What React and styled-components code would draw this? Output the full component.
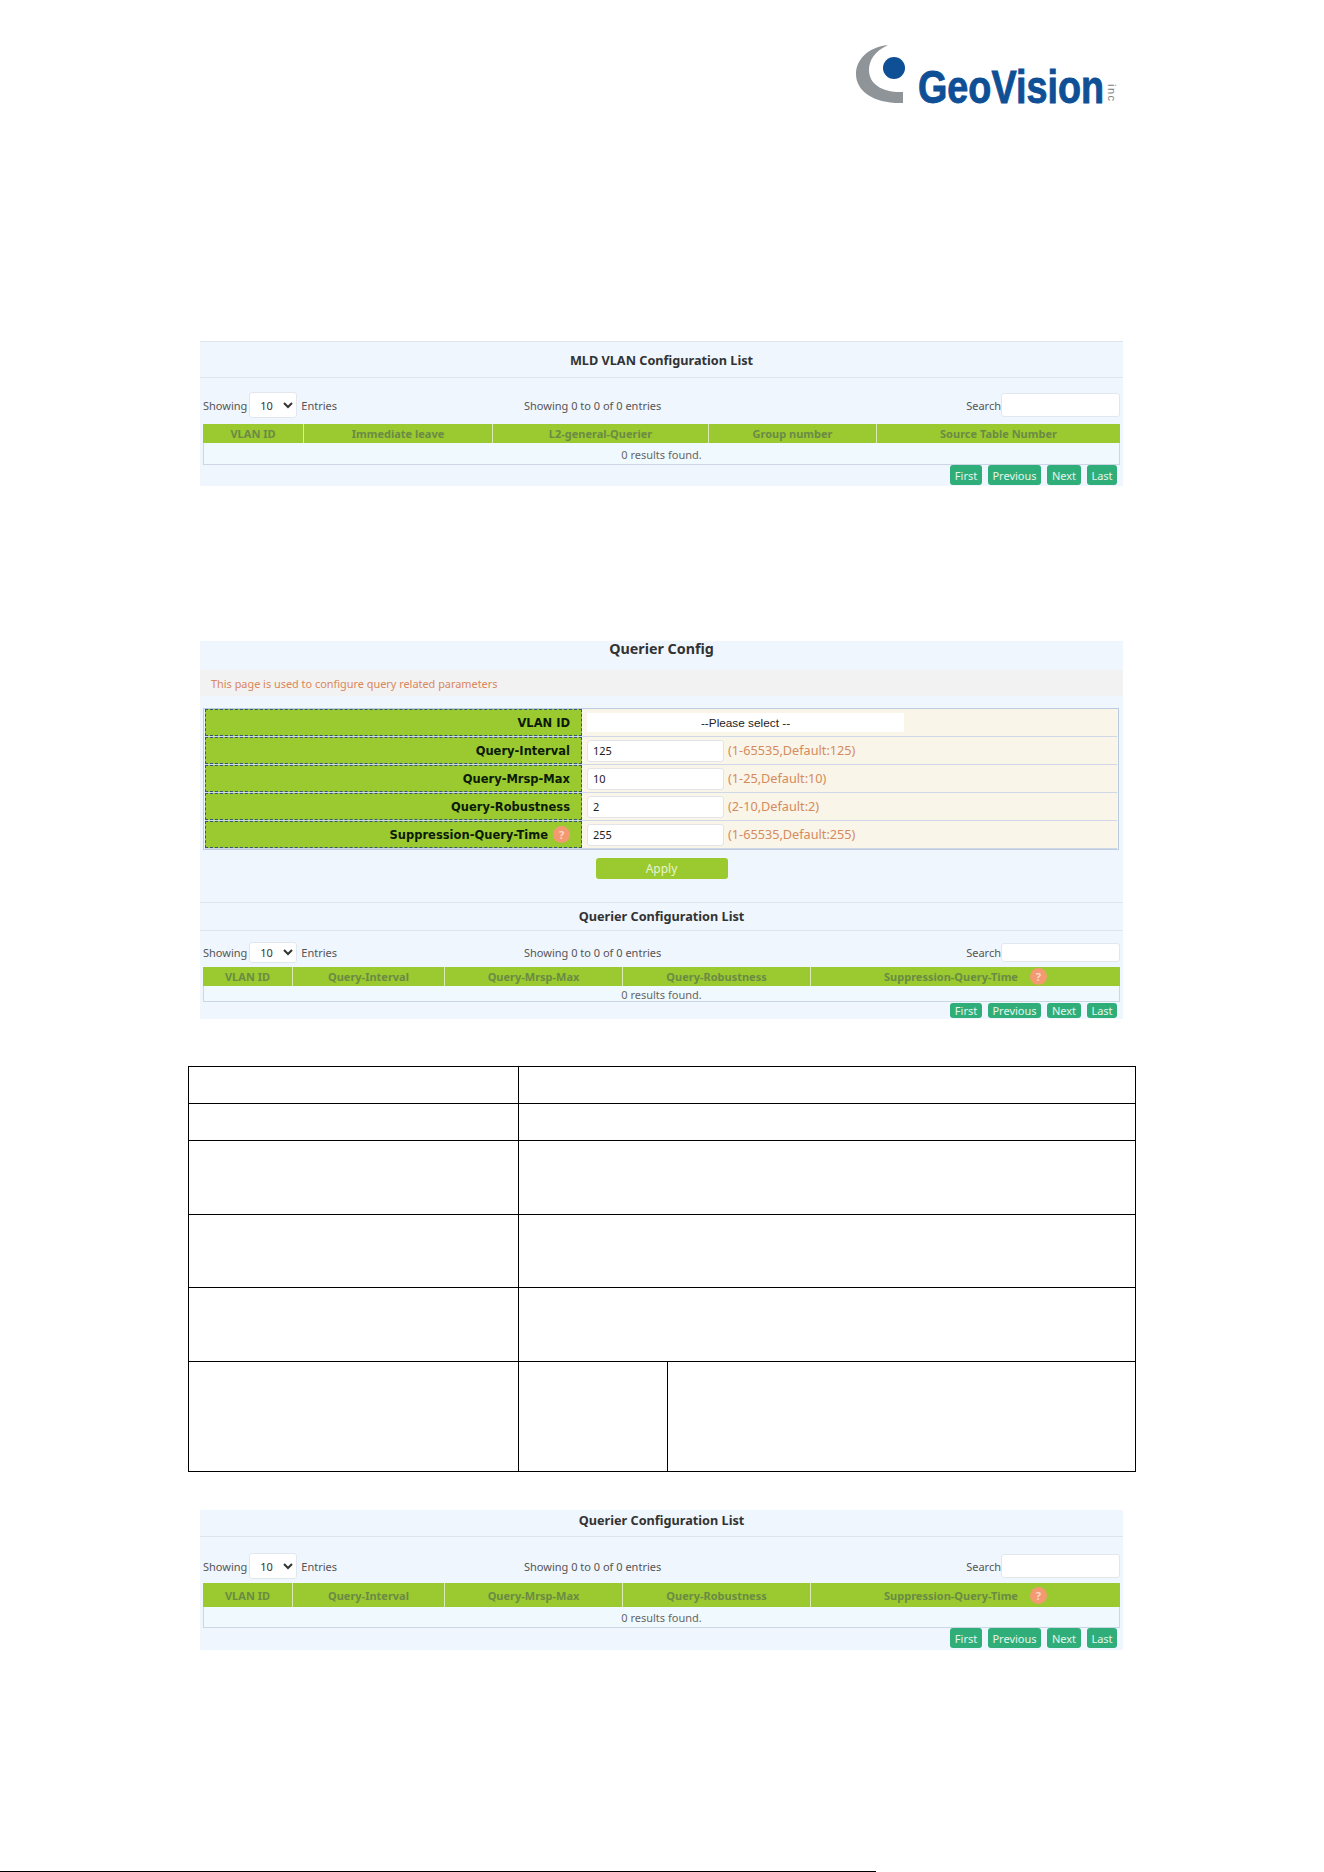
import React from "react";
import styled, { createGlobalStyle } from "styled-components";

const GlobalStyle = createGlobalStyle`
  html, body {
    margin: 0;
    padding: 0;
    background: #fff;
  }
  * {
    box-sizing: border-box;
  }
`;

const Page = styled.div`
  height: 1872px;
  display: flex;
  flex-direction: column;
  overflow: hidden;
  font-family: "Noto Sans", "Open Sans", sans-serif;
`;

const LogoRow = styled.header`
  height: 125px;
  padding: 40px 174px 0 0;
  display: flex;
  justify-content: flex-end;
`;

const LogoWord = styled.text`
  font-family: "Liberation Sans", Arial, sans-serif;
  font-weight: 700;
  font-size: 46px;
  fill: #0e4f95;
  stroke: #0e4f95;
  stroke-width: 0.9px;
`;

const LogoInc = styled.text`
  font-family: "Liberation Sans", Arial, sans-serif;
  font-size: 11px;
  letter-spacing: 1.5px;
  fill: #7c8287;
`;

const Sheet = styled.main`
  padding: 0 188px;
  display: flex;
  flex-direction: column;
`;

const Panel = styled.section`
  margin: ${(p) => p.$top}px 13px 0 12px;
  background: #f0f6fd;
`;

const ListBlock = styled.div`
  border-top: ${(p) => (p.$topLine ? "1px solid #dde4ee" : "none")};
`;

const ListTitle = styled.h2`
  margin: 0;
  height: ${(p) => p.$h}px;
  padding-bottom: ${(p) => p.$pb || 0}px;
  border-bottom: 1px solid #dde4ee;
  display: flex;
  align-items: center;
  justify-content: center;
  font-size: 12.7px;
  font-weight: 700;
  color: #333;
`;

const Toolbar = styled.div`
  height: ${(p) => p.$h}px;
  padding: 0 3px ${(p) => p.$pb}px;
  display: grid;
  grid-template-columns: 321px 1fr auto;
  align-items: end;
  font-size: 11px;
  color: #555;
`;

const ToolGroup = styled.div`
  height: ${(p) => p.$h}px;
  display: flex;
  align-items: center;
`;

const PageSize = styled.select`
  width: 48px;
  height: 100%;
  margin: 0 4px 0 2px;
  padding: 0 0 0 6px;
  background: #fff;
  border: 1px solid #e2e7ef;
  border-radius: 3px;
  font-family: inherit;
  font-size: 11px;
  color: #333;
`;

const SearchInput = styled.input`
  width: 119px;
  height: calc(100% - 2px);
  background: #fff;
  border: 1px solid #e2e7ef;
  border-radius: 3px;
`;

const DataTable = styled.div`
  margin: 0 3px;
  border: 1px solid #cdd6e4;
  border-top: none;
`;

const HeadRow = styled.div`
  height: ${(p) => p.$h}px;
  margin: 0 -1px;
  display: grid;
  grid-template-columns: ${(p) => p.$cols};
  background: #9aca2f;
`;

const HeadCell = styled.div`
  display: flex;
  align-items: center;
  justify-content: center;
  gap: 12px;
  border-left: ${(p) => (p.$first ? "none" : "1px solid #dbe9b4")};
  font-size: 11px;
  font-weight: 700;
  color: #6b8a45;
`;

const EmptyRow = styled.div`
  height: ${(p) => p.$h}px;
  padding-top: 1px;
  display: flex;
  align-items: center;
  justify-content: center;
  background: #f0fafe;
  font-size: 11px;
  color: #666;
`;

const Pager = styled.div`
  height: ${(p) => p.$h}px;
  padding: ${(p) => p.$pt || 0}px 6px 0 0;
  display: flex;
  justify-content: flex-end;
  gap: 6px;
`;

const PagerButton = styled.button`
  height: ${(p) => p.$h}px;
  width: ${(p) => p.$w}px;
  padding: 0;
  border: none;
  border-radius: 3px;
  background: #2fae7a;
  font-family: inherit;
  font-size: 11px;
  color: #e6f5ea;
`;

const Badge = styled.span`
  width: 17px;
  height: 17px;
  flex: none;
  border-radius: 50%;
  display: inline-flex;
  align-items: center;
  justify-content: center;
  background: #f39a73;
  font-family: "Noto Sans", sans-serif;
  font-size: 11px;
  font-weight: 700;
  color: #fbd9c8;
`;

const ConfigTitle = styled.h2`
  margin: 0;
  height: 29px;
  text-align: center;
  font-size: 14.3px;
  line-height: 16px;
  font-weight: 700;
  color: #333;
`;

const Notice = styled.p`
  margin: 0;
  height: 26px;
  padding-left: 11px;
  display: flex;
  align-items: center;
  background: #f2f2f2;
  font-size: 10.9px;
  color: #d9875c;
`;

const FormTable = styled.div`
  margin: 12px 4px 0 3px;
  padding: 0 1px;
  border: 1px solid #bccbe0;
  display: flex;
  flex-direction: column;
`;

const FormRow = styled.div`
  height: 28px;
  display: grid;
  grid-template-columns: 377px 1fr;
  background: #f9f5e8;
  border-bottom: 1px solid #cfd8e6;
`;

const FormLabel = styled.label`
  padding-right: 11px;
  display: flex;
  align-items: center;
  justify-content: flex-end;
  gap: 5px;
  background: #9aca2f;
  border: 1px dashed #35587a;
  font-family: "DejaVu Sans", sans-serif;
  font-size: 11.5px;
  font-weight: 700;
  color: #0c1a08;
`;

const FormField = styled.div`
  padding-left: 5px;
  display: flex;
  align-items: center;
  gap: 4px;
`;

const FieldSelect = styled.select`
  width: 317px;
  height: 19px;
  border: none;
  background: #fff;
  appearance: none;
  text-align: center;
  font-family: "Liberation Sans", Arial, sans-serif;
  font-size: 11.8px;
  color: #222;
`;

const FieldInput = styled.input`
  width: 137px;
  height: 22px;
  padding: 0 5px;
  background: #fff;
  border: 1px solid #e2e4e6;
  border-radius: 3px;
  font-family: inherit;
  font-size: 11px;
  color: #222;
`;

const Hint = styled.span`
  margin-bottom: 2px;
  font-size: 12.7px;
  color: #d68a5e;
`;

const ApplyRow = styled.div`
  height: 52px;
  padding-top: 8px;
  display: flex;
  justify-content: center;
`;

const ApplyButton = styled.button`
  width: 132px;
  height: 21px;
  padding: 0;
  border: none;
  border-radius: 3px;
  background: #9aca2f;
  font-family: inherit;
  font-size: 12px;
  color: #e8f3cf;
`;

const BlankTable = styled.table`
  margin-top: 47px;
  width: 947px;
  border-collapse: collapse;
  table-layout: fixed;
`;

const BlankRow = styled.tr`
  height: ${(p) => p.$h}px;
`;

const BlankCell = styled.td`
  padding: 0;
  border: 1.5px solid #000;
`;

const FooterRule = styled.div`
  margin-top: auto;
  width: 876px;
  height: 1.5px;
  background: #000;
`;

const mldColumns = [
  { label: "VLAN ID" },
  { label: "Immediate leave" },
  { label: "L2-general-Querier" },
  { label: "Group number" },
  { label: "Source Table Number" },
];

const querierColumns = [
  { label: "VLAN ID" },
  { label: "Query-Interval" },
  { label: "Query-Mrsp-Max" },
  { label: "Query-Robustness" },
  { label: "Suppression-Query-Time", help: true },
];

const pagerButtons = [
  { label: "First", width: 32 },
  { label: "Previous", width: 53 },
  { label: "Next", width: 34 },
  { label: "Last", width: 30 },
];

const fields = [
  { label: "Query-Interval", value: "125", hint: "(1-65535,Default:125)" },
  { label: "Query-Mrsp-Max", value: "10", hint: "(1-25,Default:10)" },
  { label: "Query-Robustness", value: "2", hint: "(2-10,Default:2)" },
  { label: "Suppression-Query-Time", value: "255", hint: "(1-65535,Default:255)", help: true },
];

function Logo() {
  return (
    <svg width="300" height="85" viewBox="850 40 300 85">
      <path
        d="M888 45C868 47 856 60 856 74C856 92 875 104 903 103L903 92C884 93 869 85 869 70C869 60 875 51 888 45Z"
        fill="#8f9498"
      />
      <circle cx="894" cy="68" r="11" fill="#0e4f95" />
      <LogoWord x="918" y="103" textLength="186" lengthAdjust="spacingAndGlyphs">
        GeoVision
      </LogoWord>
      <LogoInc x="1108" y="84" transform="rotate(90 1108 84)">
        inc
      </LogoInc>
    </svg>
  );
}

function ListBlockView({ title, columns, cols, topLine, m }) {
  return (
    <ListBlock $topLine={topLine}>
      <ListTitle $h={m.title} $pb={m.titlePb}>
        {title}
      </ListTitle>
      <Toolbar $h={m.toolbar} $pb={m.pb}>
        <ToolGroup $h={m.select}>
          Showing
          <PageSize defaultValue="10">
            <option>10</option>
            <option>25</option>
          </PageSize>
          Entries
        </ToolGroup>
        <ToolGroup $h={m.select}>Showing 0 to 0 of 0 entries</ToolGroup>
        <ToolGroup $h={m.select}>
          Search
          <SearchInput type="text" />
        </ToolGroup>
      </Toolbar>
      <DataTable>
        <HeadRow $h={m.head} $cols={cols}>
          {columns.map((col, i) => (
            <HeadCell key={col.label} $first={i === 0}>
              {col.label}
              {col.help && <Badge>?</Badge>}
            </HeadCell>
          ))}
        </HeadRow>
        <EmptyRow $h={m.row}>0 results found.</EmptyRow>
      </DataTable>
      <Pager $h={m.foot} $pt={m.footPt}>
        {pagerButtons.map((b) => (
          <PagerButton key={b.label} $h={m.button} $w={b.width}>
            {b.label}
          </PagerButton>
        ))}
      </Pager>
    </ListBlock>
  );
}

const MLD_COLS = "100px 189px 216px 168px 1fr";
const QUERIER_COLS = "89px 152px 178px 188px 1fr";

export default function App() {
  return (
    <Page>
      <GlobalStyle />
      <LogoRow>
        <Logo />
      </LogoRow>
      <Sheet>
        <Panel $top={216}>
          <ListBlockView
            title="MLD VLAN Configuration List"
            columns={mldColumns}
            cols={MLD_COLS}
            topLine
            m={{ title: 36, toolbar: 46, pb: 6, select: 26, head: 19, row: 21, foot: 21, button: 20 }}
          />
        </Panel>

        <Panel $top={155}>
          <ConfigTitle>Querier Config</ConfigTitle>
          <Notice>This page is used to configure query related parameters</Notice>
          <FormTable>
            <FormRow>
              <FormLabel>VLAN ID</FormLabel>
              <FormField>
                <FieldSelect defaultValue="">
                  <option value="">--Please select --</option>
                </FieldSelect>
              </FormField>
            </FormRow>
            {fields.map((f) => (
              <FormRow key={f.label}>
                <FormLabel>
                  {f.label}
                  {f.help && <Badge>?</Badge>}
                </FormLabel>
                <FormField>
                  <FieldInput type="text" defaultValue={f.value} />
                  <Hint>{f.hint}</Hint>
                </FormField>
              </FormRow>
            ))}
          </FormTable>
          <ApplyRow>
            <ApplyButton>Apply</ApplyButton>
          </ApplyRow>
          <ListBlockView
            title="Querier Configuration List"
            columns={querierColumns}
            cols={QUERIER_COLS}
            topLine
            m={{ title: 28, titlePb: 2, toolbar: 36, pb: 4, select: 21, head: 19, row: 15, foot: 17, footPt: 1, button: 15 }}
          />
        </Panel>

        <BlankTable>
          <colgroup>
            <col width="330" />
            <col width="149" />
            <col width="468" />
          </colgroup>
          <tbody>
            {[37, 37, 74, 73, 74].map((h, i) => (
              <BlankRow key={i} $h={h}>
                <BlankCell />
                <BlankCell colSpan={2} />
              </BlankRow>
            ))}
            <BlankRow $h={110}>
              <BlankCell />
              <BlankCell />
              <BlankCell />
            </BlankRow>
          </tbody>
        </BlankTable>

        <Panel $top={38}>
          <ListBlockView
            title="Querier Configuration List"
            columns={querierColumns}
            cols={QUERIER_COLS}
            m={{ title: 27, titlePb: 7, toolbar: 46, pb: 4, select: 26, head: 24, row: 20, foot: 22, button: 20 }}
          />
        </Panel>
      </Sheet>
      <FooterRule />
    </Page>
  );
}
